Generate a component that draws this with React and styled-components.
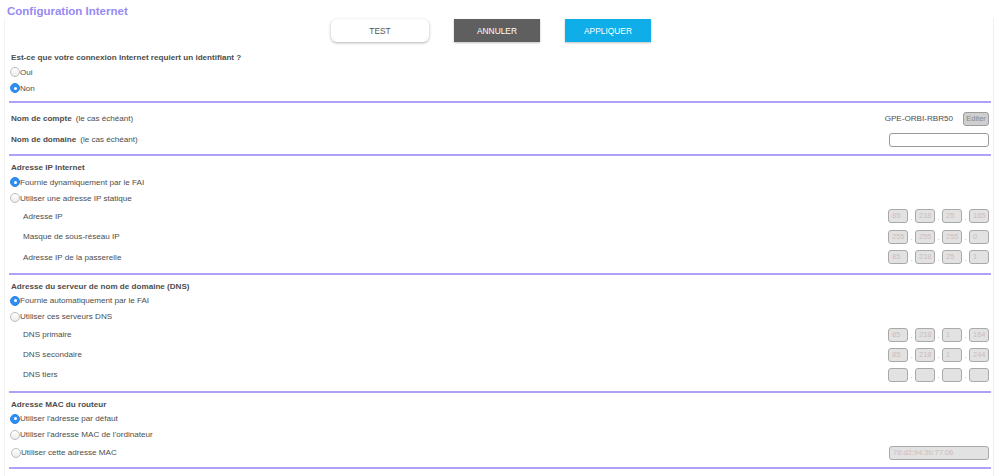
import React from "react";
import styled, { createGlobalStyle } from "styled-components";

const GlobalStyle = createGlobalStyle`
  html, body { margin: 0; padding: 0; background: #ffffff; }
  body { font-family: "Liberation Sans", Arial, sans-serif; color: #4d4d4d; }
  * { box-sizing: border-box; }
`;

const Page = styled.div`
  width: 998px;
  height: 476px;
  overflow: hidden;
  position: relative;
`;

const Title = styled.h1`
  margin: 0;
  padding: 4px 0 0 7px;
  height: 18px;
  line-height: 14px;
  font-size: 11.5px;
  font-weight: bold;
  color: #978af4;
`;

const Panel = styled.div`
  margin: 0 4px;
  padding: 0 2px 0 4px;
  border-left: 1px solid #f3f3f3;
  border-right: 1px solid #f0f0f0;
  min-height: 460px;
`;

const Toolbar = styled.div`
  display: flex;
  justify-content: center;
  gap: 25px;
  padding: 1px 18px 0 0;
  height: 24px;
`;

const Button = styled.button`
  width: ${(p) => (p.$wide ? 98 : 86)}px;
  height: 23px;
  font-family: "Liberation Sans", Arial, sans-serif;
  font-size: 8.4px;
  border: none;
  padding: 0;
  cursor: pointer;
  color: ${(p) => (p.$variant === "light" ? "#555" : "#fff")};
  background: ${(p) =>
    p.$variant === "light" ? "#fff" : p.$variant === "dark" ? "#5f5f5f" : "#10aee9"};
  border-radius: ${(p) => (p.$variant === "light" ? "6px" : "0")};
  box-shadow: ${(p) =>
    p.$variant === "light"
      ? "0 1px 3px rgba(0,0,0,0.3)"
      : "0 1px 2px rgba(0,0,0,0.25)"};
`;

const Question = styled.div`
  margin-top: 10px;
  padding-left: 1px;
  height: 12px;
  line-height: 12px;
  font-size: 8.1px;
  font-weight: bold;
  color: #4d4d4d;
`;

const Header = styled.div`
  padding-left: 1px;
  height: 12px;
  line-height: 12px;
  font-size: 8.1px;
  font-weight: bold;
  color: #4d4d4d;
`;

const Section = styled.section`
  padding: ${(p) => p.$pt || 0}px 2px ${(p) => p.$pb || 0}px 1px;
  border-bottom: 2px solid #ada2f6;
`;

const RadioRow = styled.label`
  display: flex;
  align-items: center;
  height: ${(p) => p.$h || 16}px;
  font-size: 8.1px;
  color: #4d4d4d;
`;

const Radio = styled.span`
  width: 10px;
  height: 10px;
  border-radius: 50%;
  flex: none;
  position: relative;
  background: ${(p) =>
    p.$checked ? "#2f8ef2" : "linear-gradient(#fff, #ececec)"};
  border: 1px solid ${(p) => (p.$checked ? "#2a85e6" : "#bdbdbd")};
  &::after {
    content: "";
    display: ${(p) => (p.$checked ? "block" : "none")};
    position: absolute;
    left: 2.5px;
    top: 2.5px;
    width: 3px;
    height: 3px;
    border-radius: 50%;
    background: #fff;
  }
`;

const Row = styled.div`
  display: flex;
  align-items: center;
  justify-content: space-between;
  height: ${(p) => p.$h || 20}px;
  padding-left: ${(p) => (p.$indent ? 13 : 1)}px;
  font-size: 8.1px;
  color: #4d4d4d;
`;

const Label = styled.span`
  font-weight: ${(p) => (p.$bold ? "bold" : "normal")};
`;

const Hint = styled.span`
  font-weight: normal;
  margin-left: 4px;
`;

const Right = styled.div`
  display: flex;
  align-items: center;
  gap: 10px;
`;

const SmallButton = styled.button`
  width: 26px;
  height: 14px;
  padding: 0;
  font-family: "Liberation Sans", Arial, sans-serif;
  font-size: 7.5px;
  color: #8a8a8a;
  background: #cfcfcf;
  border: 1px solid #9c9c9c;
  border-radius: 3px;
`;

const TextInput = styled.div`
  width: 100px;
  height: 14px;
  border: 1px solid ${(p) => (p.$disabled ? "#a9a9a9" : "#9a9a9a")};
  border-radius: 3px;
  background: ${(p) => (p.$disabled ? "#e2e2e2" : "#fff")};
  font-size: 7.5px;
  line-height: 12px;
  padding-left: 3px;
  color: #d0bcbc;
`;

const IpGroup = styled.div`
  display: flex;
  align-items: center;
`;

const Octet = styled.div`
  width: 20px;
  height: 14px;
  border: 1px solid #a9a9a9;
  border-radius: 3px;
  background: #e2e2e2;
  font-size: 7.5px;
  line-height: 12px;
  padding-left: 3px;
  color: #d0bcbc;
`;

const Dot = styled.span`
  width: 7px;
  text-align: center;
  font-size: 8px;
  color: #aaa;
  line-height: 14px;
  padding-top: 3px;
`;

function Ip({ values }) {
  return (
    <IpGroup>
      {values.map((v, i) => (
        <React.Fragment key={i}>
          {i > 0 && <Dot>.</Dot>}
          <Octet>{v}</Octet>
        </React.Fragment>
      ))}
    </IpGroup>
  );
}

function RadioOpt({ checked, children, h }) {
  return (
    <RadioRow $h={h}>
      <Radio $checked={checked} />
      {children}
    </RadioRow>
  );
}

export default function App() {
  return (
    <Page>
      <GlobalStyle />
      <Title>Configuration Internet</Title>
      <Panel>
        <Toolbar>
          <Button $variant="light" $wide>TEST</Button>
          <Button $variant="dark">ANNULER</Button>
          <Button $variant="blue">APPLIQUER</Button>
        </Toolbar>

        <Section $pt={0} $pb={5}>
          <Question>Est-ce que votre connexion Internet requiert un identifiant ?</Question>
          <RadioOpt>Oui</RadioOpt>
          <RadioOpt checked>Non</RadioOpt>
        </Section>

        <Section $pt={5} $pb={4}>
          <Row $h={21}>
            <Label $bold>
              Nom de compte<Hint>(le cas échéant)</Hint>
            </Label>
            <Right>
              <span>GPE-ORBI-RBR50</span>
              <SmallButton>Editer</SmallButton>
            </Right>
          </Row>
          <Row $h={21}>
            <Label $bold>
              Nom de domaine<Hint>(le cas échéant)</Hint>
            </Label>
            <TextInput />
          </Row>
        </Section>

        <Section $pt={6} $pb={5}>
          <Header>Adresse IP Internet</Header>
          <RadioOpt checked>Fournie dynamiquement par le FAI</RadioOpt>
          <RadioOpt>Utiliser une adresse IP statique</RadioOpt>
          <Row $indent $h={20.5}>
            <Label>Adresse IP</Label>
            <Ip values={["85", "218", "25", "165"]} />
          </Row>
          <Row $indent $h={20.5}>
            <Label>Masque de sous-réseau IP</Label>
            <Ip values={["255", "255", "255", "0"]} />
          </Row>
          <Row $indent $h={20.5}>
            <Label>Adresse IP de la passerelle</Label>
            <Ip values={["85", "218", "25", "1"]} />
          </Row>
        </Section>

        <Section $pt={6} $pb={6}>
          <Header>Adresse du serveur de nom de domaine (DNS)</Header>
          <RadioOpt checked>Fournie automatiquement par le FAI</RadioOpt>
          <RadioOpt>Utiliser ces serveurs DNS</RadioOpt>
          <Row $indent $h={20}>
            <Label>DNS primaire</Label>
            <Ip values={["85", "218", "1", "164"]} />
          </Row>
          <Row $indent $h={20}>
            <Label>DNS secondaire</Label>
            <Ip values={["85", "218", "1", "244"]} />
          </Row>
          <Row $indent $h={20}>
            <Label>DNS tiers</Label>
            <Ip values={["", "", "", ""]} />
          </Row>
        </Section>

        <Section $pt={6} $pb={4}>
          <Header>Adresse MAC du routeur</Header>
          <RadioOpt checked>Utiliser l'adresse par défaut</RadioOpt>
          <RadioOpt>Utiliser l'adresse MAC de l'ordinateur</RadioOpt>
          <Row $h={20}>
            <RadioRow as="span" $h={20}>
              <Radio />
              Utiliser cette adresse MAC
            </RadioRow>
            <TextInput $disabled>78:d2:94:3b:77:06</TextInput>
          </Row>
        </Section>
      </Panel>
    </Page>
  );
}
